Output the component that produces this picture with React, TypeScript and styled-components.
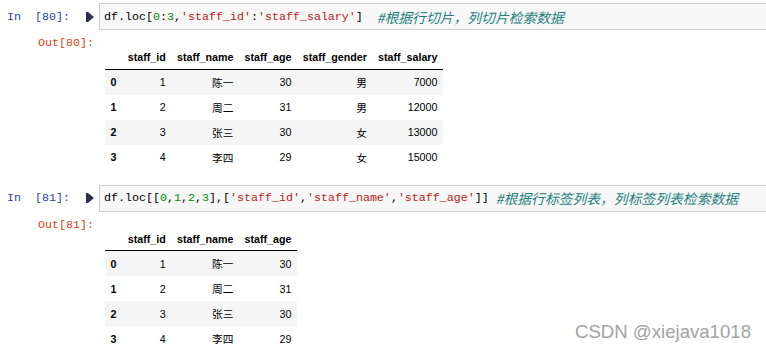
import React from "react";
import styled, { createGlobalStyle } from "styled-components";

const Global = createGlobalStyle`
  html, body { margin: 0; padding: 0; background: #fff; }
  body { font-family: "Liberation Sans", "Noto Sans CJK SC", sans-serif; overflow: hidden; }
`;

const Page = styled.div`
  position: relative;
  width: 766px;
  height: 351px;
  padding-top: 3px;
  box-sizing: border-box;
  overflow: hidden;
`;

const Cell = styled.div<{ $gap?: number }>`
  display: flex;
  flex-direction: column;
  margin-top: ${(p) => p.$gap ?? 0}px;
`;

const InputRow = styled.div`
  display: flex;
  height: 27px;
`;

const InPrompt = styled.div`
  width: 99px;
  flex: none;
  display: flex;
  align-items: center;
  padding-left: 7px;
  box-sizing: border-box;
  color: #303f9f;
  font-family: "Liberation Mono", monospace;
  font-size: 11.67px;
  white-space: pre;
`;

const RunIcon = styled.svg`
  margin-left: auto;
  margin-right: 5px;
  width: 8px;
  height: 10px;
`;

const CodeBox = styled.div`
  flex: 1;
  display: flex;
  align-items: center;
  background: #f7f7f7;
  border: 1px solid #cfcfcf;
  border-right: none;
  padding-left: 4px;
  font-family: "Liberation Mono", "Noto Sans CJK SC", monospace;
  font-size: 11.67px;
  color: #000;
  white-space: pre;
`;

const Num = styled.span`
  color: #008800;
`;

const Str = styled.span`
  color: #ba2121;
`;

const Comment = styled.span`
  color: #1f7f7f;
  font-style: italic;
  font-family: "Noto Sans CJK SC", sans-serif;
  font-size: 13.8px;
`;

const OutputRow = styled.div`
  display: flex;
  margin-top: 7px;
`;

const OutPrompt = styled.div`
  width: 99px;
  flex: none;
  text-align: right;
  padding-right: 5px;
  box-sizing: border-box;
  color: #d84315;
  font-family: "Liberation Mono", monospace;
  font-size: 11.67px;
  line-height: 12px;
  height: 12px;
  white-space: pre;
`;

const Table = styled.table`
  margin-top: 9px;
  margin-left: 6px;
  border-collapse: collapse;
  border-spacing: 0;
  font-size: 10.7px;
  color: #000;
`;

const HeadCell = styled.th`
  height: 23px;
  padding: 0 5.6px;
  text-align: right;
  vertical-align: middle;
  font-weight: bold;
  border-bottom: 1px solid #000;
  box-sizing: border-box;
`;

const BodyRow = styled.tr`
  &:nth-child(odd) {
    background: #f5f5f5;
  }
`;

const IndexCell = styled.th`
  height: 25px;
  padding: 0 5.6px;
  text-align: left;
  font-weight: bold;
  vertical-align: middle;
`;

const DataCell = styled.td`
  height: 25px;
  padding: 0 5.6px;
  text-align: right;
  vertical-align: middle;
`;

const Watermark = styled.div`
  position: absolute;
  right: 15px;
  top: 321px;
  font-family: "Liberation Sans", sans-serif;
  font-size: 18.6px;
  line-height: 22px;
  color: #a3a3a3;
  text-shadow: 0 0 1px rgba(255, 255, 255, 0.8);
`;

type Row = (string | number)[];

const rows: Row[] = [
  [0, 1, "陈一", 30, "男", 7000],
  [1, 2, "周二", 31, "男", 12000],
  [2, 3, "张三", 30, "女", 13000],
  [3, 4, "李四", 29, "女", 15000],
];

const Run = () => (
  <RunIcon viewBox="0 0 8 10">
    <rect x="0" y="0" width="2" height="10" fill="#2b2f4a" />
    <polygon points="2,0 8,5 2,10" fill="#2b2f4a" />
  </RunIcon>
);

const DataTable: React.FC<{ cols: string[] }> = ({ cols }) => (
  <Table>
    <thead>
      <tr>
        <HeadCell />
        {cols.map((c) => (
          <HeadCell key={c}>{c}</HeadCell>
        ))}
      </tr>
    </thead>
    <tbody>
      {rows.map((r) => (
        <BodyRow key={r[0]}>
          <IndexCell>{r[0]}</IndexCell>
          {r.slice(1, cols.length + 1).map((v, i) => (
            <DataCell key={i}>{v}</DataCell>
          ))}
        </BodyRow>
      ))}
    </tbody>
  </Table>
);

export default function App() {
  return (
    <Page>
      <Global />
      <Cell>
        <InputRow>
          <InPrompt>
            {"In  [80]:"}
            <Run />
          </InPrompt>
          <CodeBox>
            {"df.loc["}
            <Num>0</Num>:<Num>3</Num>,<Str>'staff_id'</Str>:<Str>'staff_salary'</Str>
            {"]  "}
            <Comment>#根据行切片，列切片检索数据</Comment>
          </CodeBox>
        </InputRow>
        <OutputRow>
          <OutPrompt>Out[80]:</OutPrompt>
          <DataTable cols={["staff_id", "staff_name", "staff_age", "staff_gender", "staff_salary"]} />
        </OutputRow>
      </Cell>
      <Cell $gap={15}>
        <InputRow>
          <InPrompt>
            {"In  [81]:"}
            <Run />
          </InPrompt>
          <CodeBox>
            {"df.loc[["}
            <Num>0</Num>,<Num>1</Num>,<Num>2</Num>,<Num>3</Num>
            {"],["}
            <Str>'staff_id'</Str>,<Str>'staff_name'</Str>,<Str>'staff_age'</Str>
            {"]] "}
            <Comment>#根据行标签列表，列标签列表检索数据</Comment>
          </CodeBox>
        </InputRow>
        <OutputRow>
          <OutPrompt>Out[81]:</OutPrompt>
          <DataTable cols={["staff_id", "staff_name", "staff_age"]} />
        </OutputRow>
      </Cell>
      <Watermark>CSDN @xiejava1018</Watermark>
    </Page>
  );
}
